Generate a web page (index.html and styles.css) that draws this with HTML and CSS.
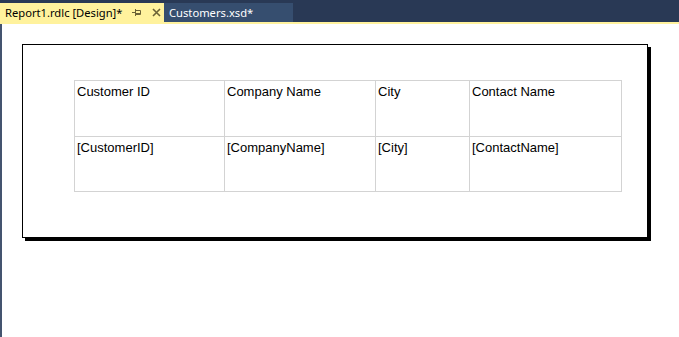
FILE: index.html
```html
<!DOCTYPE html>
<html lang="en">
<head>
  <meta charset="UTF-8" />
  <title>Report1.rdlc [Design]</title>
  <link rel="stylesheet" href="styles.css">
</head>
<body>
  <div class="tab-bar">
    <div class="tab tab-active">
      <span class="tab-title">Report1.rdlc [Design]*</span>
      <svg class="tab-pin" width="9" height="7" viewBox="0 0 9 7">
        <path d="M0 3.5H3M3.5 0V7M3.5 1.5H8.5V5.5H3.5M3.5 4.5H8.5" fill="none" stroke="#6b6236" stroke-width="1"/>
      </svg>
      <svg class="tab-close" width="9" height="9" viewBox="0 0 9 9">
        <path d="M1 1L8 8M8 1L1 8" stroke="#6b6236" stroke-width="1.6"/>
      </svg>
    </div>
    <div class="tab tab-other">
      <span class="tab-title">Customers.xsd*</span>
    </div>
  </div>

  <div class="workspace">
    <div class="side-strip"></div>
    <div class="canvas">
      <div class="report-body">
        <table class="tablix">
          <tr class="header-row">
            <td class="col-id">Customer ID</td>
            <td class="col-company">Company Name</td>
            <td class="col-city">City</td>
            <td class="col-contact">Contact Name</td>
          </tr>
          <tr class="detail-row">
            <td>[CustomerID]</td>
            <td>[CompanyName]</td>
            <td>[City]</td>
            <td>[ContactName]</td>
          </tr>
        </table>
      </div>
    </div>
  </div>
</body>
</html>
```

FILE: styles.css
```css
* {
  box-sizing: border-box;
  margin: 0;
  padding: 0;
}

html, body {
  height: 100%;
}

body {
  background-color: #ffffff;
  display: flex;
  flex-direction: column;
  overflow: hidden;
}

.tab-bar {
  background-color: #293955;
  height: 24px;
  padding-top: 3px;
  display: flex;
  align-items: stretch;
  border-bottom: 2px solid #fff29d;
  flex-shrink: 0;
}

.tab {
  display: flex;
  align-items: center;
  font-family: "Noto Sans", "Open Sans", sans-serif;
  font-size: 11.2px;
  height: 19px;
  flex-shrink: 0;
}

.tab-active {
  background-color: #fff29d;
  color: #000000;
  width: 164px;
  padding-left: 5px;
}

.tab-other {
  background-color: #364e6f;
  color: #ffffff;
  width: 129px;
  padding-left: 5px;
}

.tab-title {
  white-space: nowrap;
  line-height: 19px;
}

.tab-pin {
  flex-shrink: 0;
  margin-left: 10px;
}

.tab-close {
  flex-shrink: 0;
  margin-left: 11px;
}

.workspace {
  flex: 1;
  display: flex;
}

.side-strip {
  width: 2px;
  background-color: #44546f;
}

.canvas {
  flex: 1;
  padding: 20px 0 0 20px;
}

.report-body {
  width: 626px;
  height: 194px;
  border: 1px solid #000000;
  box-shadow: 3px 3px 0 #000000;
  padding: 35px 0 0 51px;
}

.tablix {
  border-collapse: collapse;
  font-family: "Liberation Sans", Arial, sans-serif;
  font-size: 13px;
  color: #000000;
}

.tablix td {
  border: 1px solid #d3d3d3;
  vertical-align: top;
  padding: 3px 3px 0 2px;
  line-height: 16px;
}

.header-row td {
  height: 56px;
}

.detail-row td {
  height: 55px;
}

.col-id {
  width: 150px;
}

.col-company {
  width: 151px;
}

.col-city {
  width: 94px;
}

.col-contact {
  width: 152px;
}
```
